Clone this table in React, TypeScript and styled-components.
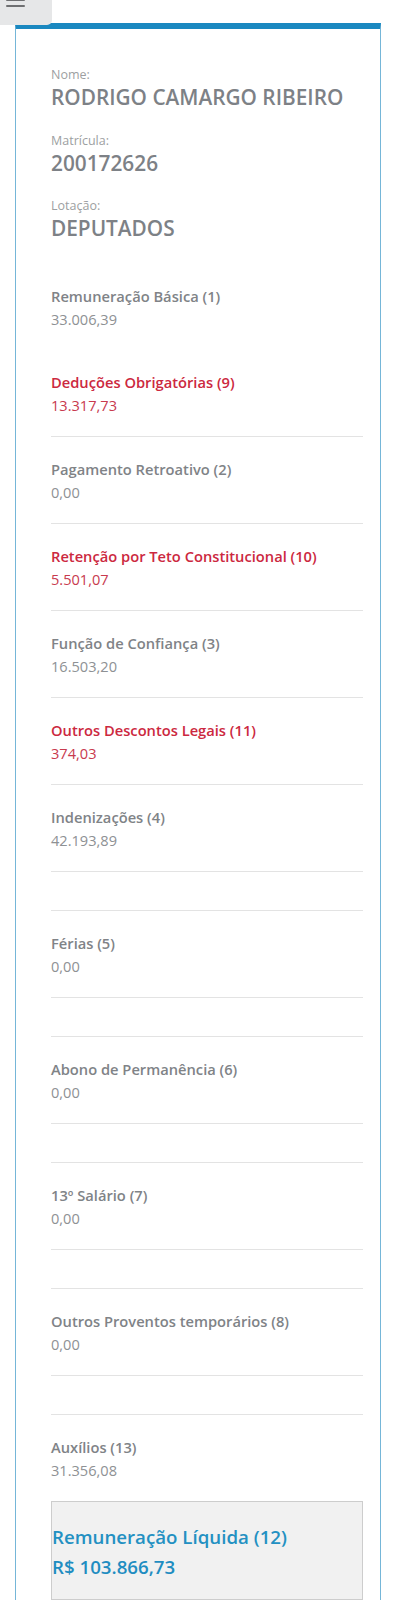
import React from "react";
import styled, { createGlobalStyle } from "styled-components";

const Global = createGlobalStyle`
  html, body { margin: 0; padding: 0; background: #ffffff; }
  body { font-family: "Open Sans", "Noto Sans", Arial, sans-serif; }
  * { box-sizing: border-box; }
`;

const Page = styled.div`
  position: relative;
  padding: 23px 21px 0 15px;
  min-height: 1600px;
`;

const MenuButton = styled.div`
  position: absolute;
  left: 0;
  top: 0;
  width: 52px;
  height: 25px;
  background: #e6e7e8;
  border-bottom-right-radius: 5px;
  overflow: hidden;
  z-index: 2;
`;

const MenuIcon = styled.svg`
  position: absolute;
  left: 6px;
  top: -7px;
`;

const Card = styled.div`
  border: 1px solid #75b6d8;
  border-top: 6px solid #1a88c0;
  border-bottom: none;
  padding: 38px 17px 0 35px;
  min-height: 1577px;
`;

const InfoGroup = styled.div`
  margin-bottom: 21.7px;
`;

const InfoLabel = styled.div`
  font-size: 12.5px;
  line-height: 16px;
  color: #9d9fa2;
`;

const InfoValue = styled.div`
  font-size: 20.8px;
  line-height: 28px;
  font-weight: 600;
  color: #7d8186;
`;

const Item = styled.div<{ $border?: boolean }>`
  padding: 22px 0 17px;
  border-bottom: ${(p) => (p.$border ? "1px solid #e3e3e3" : "none")};
`;

const EmptyItem = styled.div`
  height: 39px;
  border-bottom: 1px solid #e3e3e3;
`;

const ItemLabel = styled.div<{ $red?: boolean }>`
  font-size: 14.7px;
  line-height: 20px;
  font-weight: 600;
  color: ${(p) => (p.$red ? "#cc2840" : "#808387")};
`;

const ItemValue = styled.div<{ $red?: boolean }>`
  font-size: 14.6px;
  line-height: 27px;
  color: ${(p) => (p.$red ? "#c83a4e" : "#8e9194")};
`;

const TotalBox = styled.div`
  background: #f1f1f1;
  border: 1px solid #cdcdcd;
  padding: 22px 0 16px;
`;

const TotalLabel = styled.div`
  font-size: 18.7px;
  line-height: 26px;
  font-weight: 600;
  color: #2390c2;
`;

const TotalValue = styled.div`
  font-size: 18.7px;
  line-height: 33px;
  font-weight: 600;
  color: #1f8dc1;
`;

type Row =
  | { kind: "item"; label: string; value: string; red?: boolean; border?: boolean }
  | { kind: "empty" };

const rows: Row[] = [
  { kind: "item", label: "Remuneração Básica (1)", value: "33.006,39" },
  { kind: "item", label: "Deduções Obrigatórias (9)", value: "13.317,73", red: true, border: true },
  { kind: "item", label: "Pagamento Retroativo (2)", value: "0,00", border: true },
  { kind: "item", label: "Retenção por Teto Constitucional (10)", value: "5.501,07", red: true, border: true },
  { kind: "item", label: "Função de Confiança (3)", value: "16.503,20", border: true },
  { kind: "item", label: "Outros Descontos Legais (11)", value: "374,03", red: true, border: true },
  { kind: "item", label: "Indenizações (4)", value: "42.193,89", border: true },
  { kind: "empty" },
  { kind: "item", label: "Férias (5)", value: "0,00", border: true },
  { kind: "empty" },
  { kind: "item", label: "Abono de Permanência (6)", value: "0,00", border: true },
  { kind: "empty" },
  { kind: "item", label: "13º Salário (7)", value: "0,00", border: true },
  { kind: "empty" },
  { kind: "item", label: "Outros Proventos temporários (8)", value: "0,00", border: true },
  { kind: "empty" },
  { kind: "item", label: "Auxílios (13)", value: "31.356,08" },
];

export default function App() {
  return (
    <>
      <Global />
      <Page>
        <MenuButton>
          <MenuIcon width="19" height="14" viewBox="0 0 19 14">
            <rect x="0" y="0" width="19" height="2" rx="1" fill="#6e6f71" />
            <rect x="0" y="6" width="19" height="2" rx="1" fill="#6e6f71" />
            <rect x="0" y="12" width="19" height="2" rx="1" fill="#6e6f71" />
          </MenuIcon>
        </MenuButton>
        <Card>
          <InfoGroup>
            <InfoLabel>Nome:</InfoLabel>
            <InfoValue>RODRIGO CAMARGO RIBEIRO</InfoValue>
          </InfoGroup>
          <InfoGroup>
            <InfoLabel>Matrícula:</InfoLabel>
            <InfoValue>200172626</InfoValue>
          </InfoGroup>
          <InfoGroup>
            <InfoLabel>Lotação:</InfoLabel>
            <InfoValue>DEPUTADOS</InfoValue>
          </InfoGroup>
          {rows.map((r, i) =>
            r.kind === "empty" ? (
              <EmptyItem key={i} />
            ) : (
              <Item key={i} $border={r.border}>
                <ItemLabel $red={r.red}>{r.label}</ItemLabel>
                <ItemValue $red={r.red}>{r.value}</ItemValue>
              </Item>
            )
          )}
          <TotalBox>
            <TotalLabel>Remuneração Líquida (12)</TotalLabel>
            <TotalValue>R$ 103.866,73</TotalValue>
          </TotalBox>
        </Card>
      </Page>
    </>
  );
}
